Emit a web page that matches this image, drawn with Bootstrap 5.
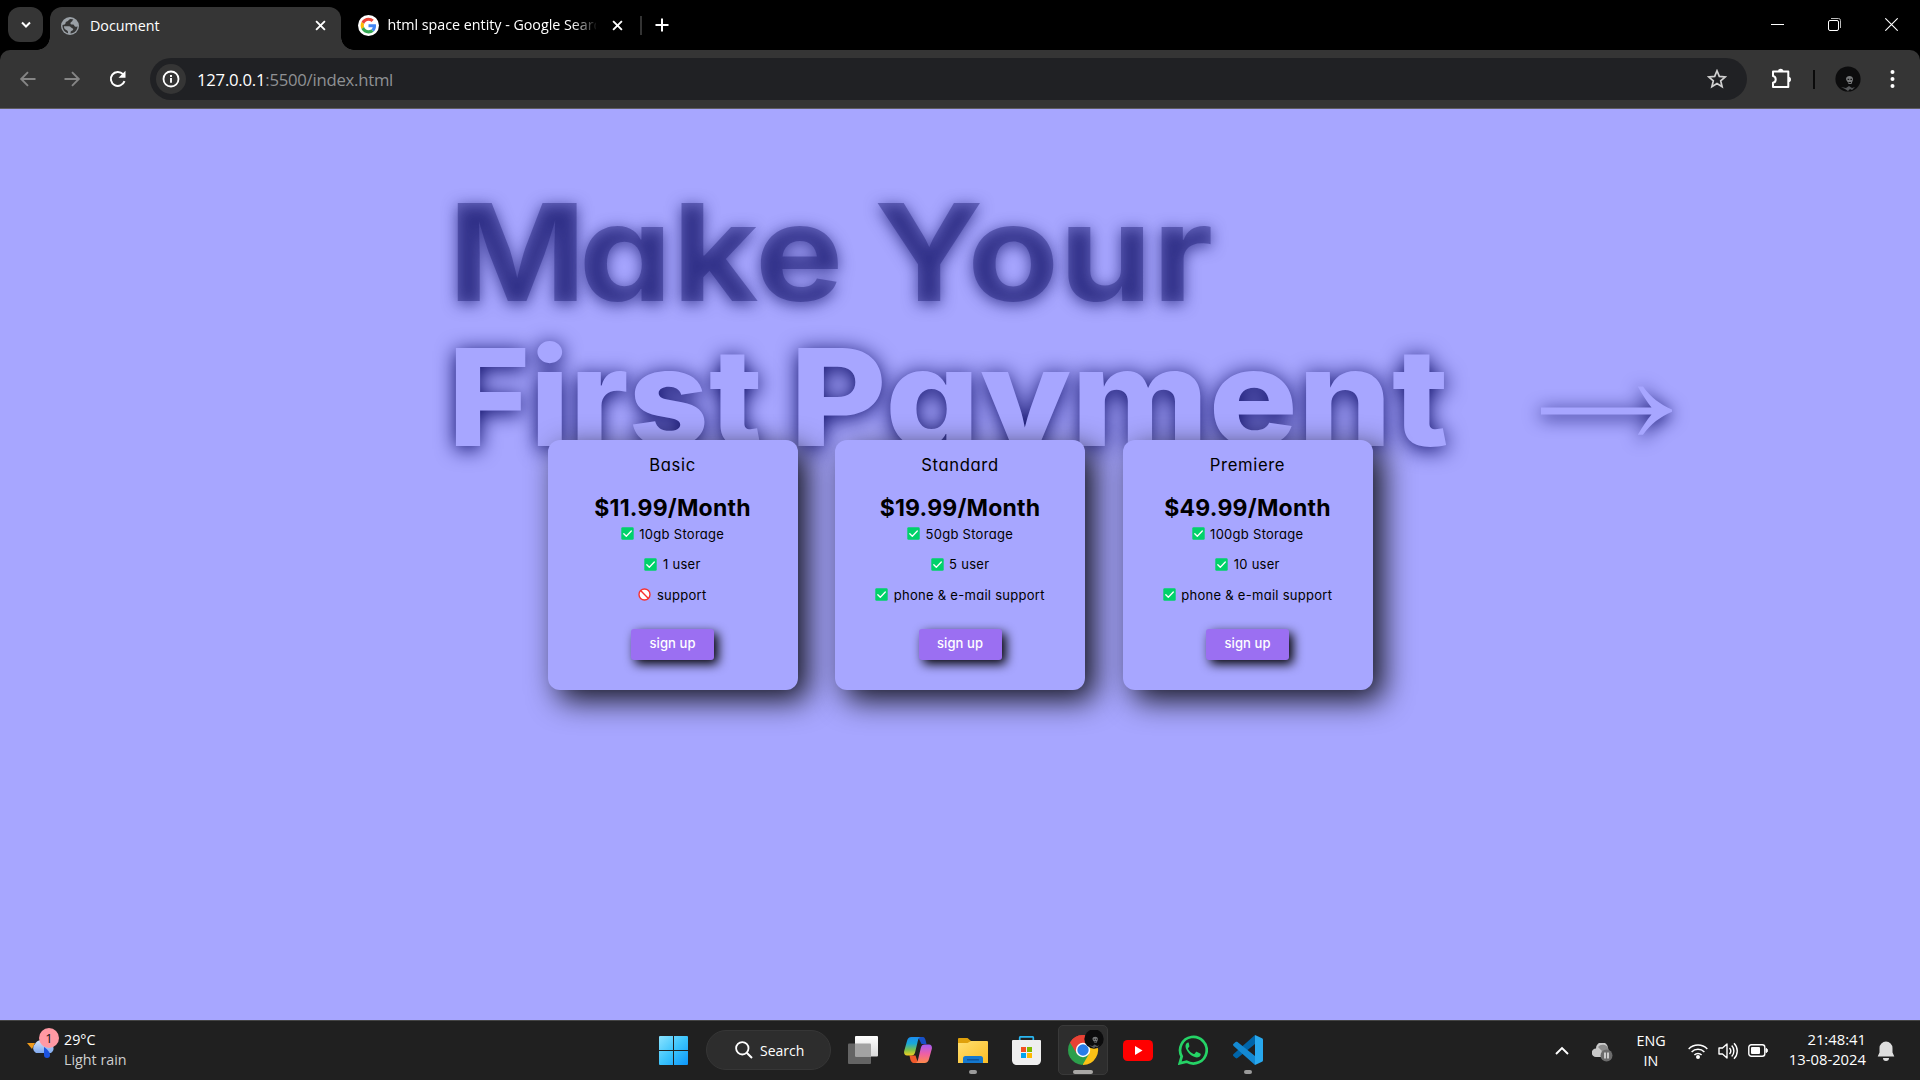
<!DOCTYPE html>
<html lang="en">
<head>
<meta charset="utf-8">
<title>Document</title>
<link href="https://cdn.jsdelivr.net/npm/bootstrap@5.3.0/dist/css/bootstrap.min.css" rel="stylesheet">
<style>
body{width:1920px;height:1080px;overflow:hidden;background:#a7a6ff;font-family:"Open Sans","Noto Sans",sans-serif;color:#fff}
svg{display:block;flex:none}
/* browser window */
.tabstrip{height:50px;background:#000;padding-left:8px}
.tabsearch{width:35px;height:35px;border-radius:12px;background:#353535;margin-top:7px}
.tab-active{width:291px;height:43px;margin:7px 0 0 7px;background:#353535;border-radius:12px 12px 0 0;position:relative;padding:0 13px 6px 10px}
.tab-active::before,.tab-active::after{content:"";position:absolute;bottom:0;width:13px;height:13px}
.tab-active::before{left:-13px;background:radial-gradient(circle at 0 0,#0000 12.5px,#353535 13px)}
.tab-active::after{right:-13px;background:radial-gradient(circle at 100% 0,#0000 12.5px,#353535 13px)}
.tab-label{font-size:14.3px;line-height:20px;white-space:nowrap;letter-spacing:-.02px}
.tab-idle{width:283px;height:50px;padding-left:17px}
.fade-label{width:208px;overflow:hidden;-webkit-mask-image:linear-gradient(90deg,#000 184px,#0000 210px);mask-image:linear-gradient(90deg,#000 184px,#0000 210px)}
.tab-sep{width:2px;height:19px;background:#333}
.toolbar-strip{height:59px;background:linear-gradient(#000 0,#000 12px,#353535 12px);position:relative}
.toolbar-inner{height:59px;background:#353535;border-radius:10px 10px 0 0;border-bottom:1px solid #5f5d62;padding:0 20px 0 18px}
.omnibox{width:1597px;height:42px;border-radius:21px;background:#202124;margin-left:22px;padding:0 20px 0 6px}
.info-dot{width:30px;height:30px;border-radius:50%;background:#353535}
.url{font-size:16.7px;letter-spacing:-.24px;margin:1px 0 0 11px;color:#8f9194}
.url b{font-weight:400;color:#fff}
.bar-sep{width:2px;height:19px;background:#0a0a0a}
/* page */
.page-area{height:911px;padding-top:71px;overflow:hidden;font-family:Inter,"Liberation Sans",sans-serif;font-feature-settings:"cv11";color:#000}
.hero{padding-left:457px;font-size:135px;line-height:145px;font-weight:700;margin:0}
.hero-line{height:145px}
.wd{display:block;white-space:nowrap;transform-origin:0 50%}
.hero-1{color:rgba(25,25,112,.42);text-shadow:0 3px 14px rgba(25,25,112,.72)}
.hero-2{color:#a7a6ff;text-shadow:0 3px 20px #080863;font-weight:800}
.w-make{width:420px;transform:scaleX(1.1);margin-left:-9px}
.cap-m{letter-spacing:-7px}
.w-your{transform:scaleX(1.11);margin-left:6px}
.w-first{width:342px;transform:scaleX(1.038);margin-left:-9px}
.w-pay{width:751px;transform:scaleX(1.098)}
.arrow{overflow:visible;margin-top:61px;filter:drop-shadow(0 3px 9px #080863)}
.plans{gap:37.5px;margin-top:-30px;position:relative}
.plan{width:250px;height:250px;border-radius:12px;background:#a7a6ff;box-shadow:10px 10px 30px rgba(0,0,0,.88);padding-top:13px}
.plan-name{font-size:16.6px;line-height:24px;letter-spacing:.66px;font-weight:400}
.plan-price{font-size:23px;line-height:32px;letter-spacing:.22px;font-weight:700;margin-top:14.5px}
.perk{font-size:13px;line-height:20px;letter-spacing:.28px;gap:5.5px;margin-bottom:10.7px;font-weight:400}
.signup{width:83px;height:31px;border:0;border-radius:3px;background:#9b6ff2;color:#fff;font-size:13px;font-weight:500;letter-spacing:.1px;margin-top:13.5px;padding:0 0 3px;line-height:20px;box-shadow:4px 4px 11px #000}
/* taskbar */
.taskbar{height:60px;background:#202020;border-top:1px solid #444;position:relative}
.slot{width:55px;height:60px;position:relative}
.slot i{position:absolute;bottom:6px;left:50%;transform:translateX(-50%);width:8px;height:4px;border-radius:2px;background:#9a9a9a}
.slot-on::before{content:"";position:absolute;inset:5px 2.5px 5px;border:1px solid #393939;border-radius:5px;background:#2d2d2d}
.slot-on i{width:20px;background:#a9a8a6}
.slot svg{position:relative}
.pill{width:125px;height:40px;border-radius:20px;background:#2d2d2d;border:1px solid #363636;margin:0 4.5px 0 5px;font-size:14px;padding-left:28px;gap:7px}
.tb-mid{position:absolute;left:646px;top:-1px}
.tb-left{position:absolute;left:27px;top:0}
.tb-right{position:absolute;right:25px;top:0;height:59px}
.tb-txt{font-size:14.3px;line-height:20px}
</style>
<script src="https://cdn.jsdelivr.net/npm/bootstrap@5.3.0/dist/js/bootstrap.bundle.min.js"></script>
</head>
<body class="d-flex flex-column">
<svg width="0" height="0" class="position-absolute">
<defs>
<symbol id="check" viewBox="0 0 13 13"><rect x=".3" y=".3" width="12.4" height="12.4" rx="1.3" fill="#00d26a"/><path d="M2.8 6.7l2.5 2.5 5-5.2" fill="none" stroke="#fff" stroke-width="1.3" stroke-linecap="round" stroke-linejoin="round"/></symbol>
<symbol id="ban" viewBox="0 0 13 13"><circle cx="6.5" cy="6.5" r="5.5" fill="#fff" stroke="#f8312f" stroke-width="1.4"/><path d="M2.6 2.6l7.8 7.8" stroke="#f8312f" stroke-width="1.4"/></symbol>
<symbol id="cross" viewBox="0 0 10 10"><path d="M1 1l8 8M9 1l-8 8" stroke="#fff" stroke-width="1.7" fill="none"/></symbol>
<symbol id="skull" viewBox="0 0 26 26"><circle cx="13" cy="13" r="12.6" fill="#0c0c0d"/><path d="M11 13c0-4 7-4 7 0 0 2-1 3-1.500 5h-3c0-2-2.500-3-2.500-5z" fill="#77797b"/><path d="M12.600 13.400h1.600M15.400 13.400H17M13.500 16.500h2.500" stroke="#191919" stroke-width="1.200"/><path d="M6 21l5 1 3-2 3 2 3-1-3 3-2-1-2 2-3-2z" fill="#55575a"/></symbol>
</defs>
</svg>

<header>
<div class="tabstrip d-flex">
  <div class="tabsearch d-flex align-items-center justify-content-center"><svg width="12" height="8" viewBox="0 0 12 8"><path d="M2 1.500l4 4 4-4" fill="none" stroke="#fff" stroke-width="2"/></svg></div>
  <div class="tab-active d-flex align-items-center">
    <svg width="20" height="20" viewBox="0 0 20 20"><circle cx="10" cy="10" r="9" fill="#9aa0a6"/><path d="M10.500 3c-2 .3-1.800 2-3.600 2.500C5 6 6 8 4.500 8.500L2.500 9c-.3 4 2 7.300 5.500 8.200.2-1.700-.2-3-1.800-3.300C4.500 13.500 4 12 4 10.300h5c1.800 0 2 1.700 3.300 1.900 1.400.2 1.200 2.300-.5 2.600-1.500.3-1 1.500-1.300 2.700 4-.3 7-3.200 7-7.300-1.300.9-2.800.8-3.200-.5-.4-1.400-1.400-1-2.600-1.100-1.700-.2-1.700-2.400-.2-2.900 1.300-.4.8-1.700 2-2.100-1-.5-2-.7-3-.6z" fill="#353535"/></svg>
    <span class="tab-label" style="margin-left:10px">Document</span>
    <svg class="ms-auto" width="11" height="11" style="margin-right:2px"><use href="#cross"/></svg>
  </div>
  <div class="tab-idle d-flex align-items-center">
    <svg width="21" height="21" viewBox="0 0 48 48"><circle cx="24" cy="24" r="24" fill="#fff"/><g transform="translate(6 6) scale(.75)"><path fill="#ea4335" d="M24 9.500c3.540 0 6.710 1.220 9.210 3.600l6.850-6.850C35.900 2.380 30.470 0 24 0 14.620 0 6.510 5.380 2.560 13.220l7.980 6.190C12.430 13.720 17.740 9.500 24 9.500z"/><path fill="#4285f4" d="M46.980 24.550c0-1.570-.15-3.090-.38-4.550H24v9.020h12.940c-.58 2.960-2.260 5.480-4.780 7.180l7.730 6c4.510-4.180 7.090-10.360 7.090-17.650z"/><path fill="#fbbc05" d="M10.530 28.590c-.48-1.450-.76-2.990-.76-4.590s.27-3.140.76-4.590l-7.980-6.190C.92 16.460 0 20.120 0 24c0 3.880.92 7.540 2.560 10.780l7.970-6.190z"/><path fill="#34a853" d="M24 48c6.480 0 11.930-2.130 15.890-5.810l-7.730-6c-2.150 1.450-4.920 2.300-8.160 2.300-6.260 0-11.570-4.220-13.470-9.910l-7.980 6.190C6.510 42.620 14.620 48 24 48z"/></g></svg>
    <span class="tab-label fade-label" style="margin-left:8.500px">html space entity - Google Search</span>
    <svg width="11" height="11" style="margin-left:16px"><use href="#cross"/></svg>
  </div>
  <div class="d-flex align-items-center" style="margin-left:16px">
    <span class="tab-sep"></span>
    <svg style="margin-left:13px" width="14" height="14" viewBox="0 0 14 14"><path d="M7 .5v13M.5 7h13" stroke="#fff" stroke-width="2"/></svg>
  </div>
  <div class="d-flex align-items-center ms-auto" style="padding-right:22px;gap:44px;height:49px">
    <svg width="13" height="13" viewBox="0 0 13 13"><path d="M0 6.500h13" stroke="#fff"/></svg>
    <svg width="13" height="13" viewBox="0 0 13 13"><rect x=".5" y="2.500" width="10" height="10" rx="1.500" fill="none" stroke="#fff"/><path d="M3 .5h7.500a2 2 0 0 1 2 2V10" fill="none" stroke="#bbb"/></svg>
    <svg width="13" height="13" viewBox="0 0 13 13"><path d="M.3.3l12.400 12.400M12.700.3L.3 12.700" stroke="#fff" stroke-width="1.100"/></svg>
  </div>
</div>
<div class="toolbar-strip">
<div class="toolbar-inner d-flex align-items-center">
  <svg width="20" height="20" viewBox="0 0 20 20"><path d="M17.500 10H3.500M10 3.200L3.200 10l6.800 6.800" fill="none" stroke="#858585" stroke-width="1.900"/></svg>
  <svg style="margin-left:24px" width="20" height="20" viewBox="0 0 20 20"><path d="M2.500 10h14M10 3.200l6.800 6.800-6.800 6.800" fill="none" stroke="#858585" stroke-width="1.900"/></svg>
  <svg style="margin-left:26px" width="20" height="20" viewBox="0 0 20 20"><path d="M16.500 12.200A7 7 0 1 1 15 5.100" fill="none" stroke="#fff" stroke-width="2"/><path d="M17.500 1.800v7h-7z" fill="#fff"/></svg>
  <div class="omnibox d-flex align-items-center">
    <span class="info-dot d-flex align-items-center justify-content-center"><svg width="18" height="18" viewBox="0 0 18 18"><circle cx="9" cy="9" r="7.500" fill="none" stroke="#fff" stroke-width="1.800"/><path d="M9 8v4.700M9 5v1.900" stroke="#fff" stroke-width="1.900"/></svg></span>
    <span class="url"><b>127.0.0.1</b>:5500/index.html</span>
    <svg class="ms-auto" width="20" height="20" viewBox="0 0 20 20"><path d="M10 1.800l2.300 5.600 6 .5-4.600 3.900 1.400 5.900-5.100-3.200-5.100 3.200 1.400-5.900L1.700 7.900l6-.5z" fill="none" stroke="#d0d0d0" stroke-width="1.700"/></svg>
  </div>
  <svg style="margin-left:23px" width="22" height="22" viewBox="0 0 22 22"><path d="M3 3.500h15.300v15.600H3v-4.300c3.600-.8 3.600-6 0-6.800z" fill="none" stroke="#fff" stroke-width="2" stroke-linejoin="round"/><path d="M8 3.500a2.700 2.700 0 0 1 5.400 0zM18.300 8.700a2.700 2.700 0 0 1 0 5.400z" fill="#fff"/></svg>
  <span class="bar-sep" style="margin-left:21px"></span>
  <svg style="margin-left:20px" width="26" height="26"><use href="#skull"/></svg>
  <svg style="margin-left:29px" width="5" height="20" viewBox="0 0 5 20"><g fill="#fff"><circle cx="2.500" cy="3" r="2"/><circle cx="2.500" cy="10" r="2"/><circle cx="2.500" cy="17" r="2"/></g></svg>
</div>
</div>
</header>

<main class="page-area">
  <h1 class="hero">
    <span class="hero-line hero-1 d-flex"><span class="wd w-make"><span class="cap-m">M</span>ake</span><span class="wd w-your">Your</span></span>
    <span class="hero-line hero-2 d-flex"><span class="wd w-first">First</span><span class="wd w-pay">Payment</span>
      <svg class="arrow" width="131" height="50" viewBox="0 0 131 50"><path d="M0 21.500h110.500C106 16 101.500 8.500 96.800.5h5.200c8 11 17 17.800 29 23v2.300c-12 5.200-21 12-29 23h-5.200c4.700-8 9.200-14.800 13.700-20.300H0z" fill="#a7a6ff"/></svg></span>
  </h1>
  <section class="plans d-flex justify-content-center">
    <article class="plan d-flex flex-column align-items-center">
      <div class="plan-name">Basic</div>
      <div class="plan-price">$11.99/Month</div>
      <div class="perk d-flex align-items-center"><svg width="13" height="13"><use href="#check"/></svg>10gb Storage</div>
      <div class="perk d-flex align-items-center"><svg width="13" height="13"><use href="#check"/></svg>1 user</div>
      <div class="perk d-flex align-items-center"><svg width="13" height="13"><use href="#ban"/></svg>support</div>
      <button class="signup">sign up</button>
    </article>
    <article class="plan d-flex flex-column align-items-center">
      <div class="plan-name">Standard</div>
      <div class="plan-price">$19.99/Month</div>
      <div class="perk d-flex align-items-center"><svg width="13" height="13"><use href="#check"/></svg>50gb Storage</div>
      <div class="perk d-flex align-items-center"><svg width="13" height="13"><use href="#check"/></svg>5 user</div>
      <div class="perk d-flex align-items-center"><svg width="13" height="13"><use href="#check"/></svg>phone &amp; e-mail support</div>
      <button class="signup">sign up</button>
    </article>
    <article class="plan d-flex flex-column align-items-center">
      <div class="plan-name">Premiere</div>
      <div class="plan-price">$49.99/Month</div>
      <div class="perk d-flex align-items-center"><svg width="13" height="13"><use href="#check"/></svg>100gb Storage</div>
      <div class="perk d-flex align-items-center"><svg width="13" height="13"><use href="#check"/></svg>10 user</div>
      <div class="perk d-flex align-items-center"><svg width="13" height="13"><use href="#check"/></svg>phone &amp; e-mail support</div>
      <button class="signup">sign up</button>
    </article>
  </section>
</main>

<footer class="taskbar">
  <div class="tb-left d-flex">
    <svg width="33" height="40" viewBox="0 0 33 40" style="margin-top:6px"><defs><linearGradient id="cl" x2="0" y2="1"><stop stop-color="#d5e5fb"/><stop offset="1" stop-color="#7fa9ef"/></linearGradient></defs><path d="M0 16l8 0-3 6z" fill="#ee9a1c"/><path d="M23 11l3 5-5 1z" fill="#ee9a1c"/><path d="M9 26a5.500 5.500 0 0 1-1-9 7 7 0 0 1 12-1 5.500 5.500 0 0 1 4 10z" fill="url(#cl)"/><path d="M17 20c3 2 6 5 6 8a3 3 0 0 1-6 0z" fill="#1b53e0"/><circle cx="22" cy="11" r="10" fill="#ff99a4"/><text x="22" y="15.500" font-size="13" text-anchor="middle" fill="#111" font-family="Open Sans">1</text></svg>
    <div class="tb-txt" style="margin:9px 0 0 4px"><div>29°C</div><div style="color:#cfcfcf">Light rain</div></div>
  </div>

  <nav class="tb-mid d-flex align-items-center">
    <div class="slot d-flex align-items-center justify-content-center"><svg width="29" height="29" viewBox="0 0 29 29"><defs><linearGradient id="win" x2="1" y2="1"><stop stop-color="#8be3ff"/><stop offset=".5" stop-color="#3cc4fc"/><stop offset="1" stop-color="#0c96fa"/></linearGradient></defs><path d="M0 1a1 1 0 0 1 1-1h13v14H0zM15 0h13a1 1 0 0 1 1 1v13H15zM0 15h14v14H1a1 1 0 0 1-1-1zM15 15h14v13a1 1 0 0 1-1 1H15z" fill="url(#win)"/></svg></div>
    <div class="pill d-flex align-items-center"><svg width="18" height="18" viewBox="0 0 18 18"><circle cx="7.300" cy="7.300" r="6.200" fill="none" stroke="#fff" stroke-width="1.800"/><path d="M11.700 11.700l5.300 5.300" stroke="#fff" stroke-width="2"/></svg><span>Search</span></div>
    <div class="slot d-flex align-items-center justify-content-center"><svg width="30" height="28" viewBox="0 0 30 28"><defs><linearGradient id="tv" x2="0" y2="1"><stop stop-color="#fff"/><stop offset="1" stop-color="#d9d9d9"/></linearGradient></defs><rect x="0" y="7.500" width="23" height="20.500" rx="1" fill="#646464"/><rect x="7" y="0" width="23" height="20.500" rx="1" fill="url(#tv)"/><path d="M7 7.500h15a1 1 0 0 1 1 1v12H8a1 1 0 0 1-1-1z" fill="#a3a3a3"/></svg></div>
    <div class="slot d-flex align-items-center justify-content-center"><svg width="28" height="26" viewBox="0 0 28 26"><defs><linearGradient id="ca" x2="0" y2="1"><stop stop-color="#1b8df0"/><stop offset=".35" stop-color="#19a7d8"/><stop offset=".7" stop-color="#7cc04a"/><stop offset="1" stop-color="#f5d020"/></linearGradient><linearGradient id="cb" x2="0" y2="1"><stop stop-color="#a35cf5"/><stop offset=".5" stop-color="#ee5fa5"/><stop offset="1" stop-color="#ff8a4a"/></linearGradient></defs><path d="M14 0h5c1.500 0 2 1.500 2.500 3l1 4h-5z" fill="#1750c8"/><path d="M14 26H9.500C8 26 7 24.500 6.500 23l-1-4.500h6z" fill="#f0592b"/><path d="M7.500 0H17c-2 0-2.700 2-3.200 4l-2.600 11c-.6 2.500-1.700 3.500-4 3.500H3C.5 18.500-.3 16.500.2 14L3 4C3.700 1.500 5 0 7.500 0z" fill="url(#ca)"/><path d="M20.500 26H11c2 0 2.700-2 3.200-4l2.600-11c.6-2.500 1.700-3.500 4-3.500H25c2.500 0 3.300 2 2.800 4.500L25 22c-.7 2.500-2 4-4.500 4z" fill="url(#cb)"/></svg></div>
    <div class="slot d-flex align-items-center justify-content-center"><svg width="30" height="27" viewBox="0 0 30 27"><defs><linearGradient id="fo" x2="1" y2="1"><stop stop-color="#ffdf70"/><stop offset="1" stop-color="#fbbd25"/></linearGradient></defs><path d="M0 2a1 1 0 0 1 1-1h8.500l3.500 3v4H0z" fill="#dfa00b"/><path d="M0 6h9.500l3.500-2h16a1 1 0 0 1 1 1v21H0z" fill="url(#fo)"/><path d="M5 26v-4.500a2.500 2.500 0 0 1 2.500-2.500h15a2.500 2.500 0 0 1 2.500 2.500V26z" fill="#1478cf"/><path d="M9 22.800h12" stroke="#0c4f94" stroke-width="1.300"/></svg><i></i></div>
    <div class="slot d-flex align-items-center justify-content-center pe-1"><svg width="29" height="29" viewBox="0 0 29 29"><path d="M7.700 6V1.800a1 1 0 0 1 1-1h11.600a1 1 0 0 1 1 1V6" fill="none" stroke="#29b6f0" stroke-width="1.700"/><path d="M0 5a1 1 0 0 1 1-1h27a1 1 0 0 1 1 1v19c0 3-2 5-5 5H5c-3 0-5-2-5-5z" fill="#efefef"/><path d="M9 11h5v5H9z" fill="#f25022"/><path d="M15 11h5v5h-5z" fill="#7fba00"/><path d="M9 17h5v5H9z" fill="#00a4ef"/><path d="M15 17h5v5h-5z" fill="#ffb900"/></svg></div>
    <div class="slot slot-on d-flex align-items-center justify-content-center"><svg width="54" height="40" viewBox="0 0 54 40"><g transform="translate(12 5)"><path d="M15 15L2 7.500A15 15 0 0 1 28 7.500z" fill="#e94235"/><path d="M15 15l13-7.500A15 15 0 0 1 15 30z" fill="#fbc116"/><path d="M15 15v0L2 7.500A15 15 0 0 0 14.500 30l6.500-11z" fill="#2c9f4b"/><path d="M15 8h13.300A15 15 0 0 0 2 7.500l6.700 11z" fill="#e94235"/><circle cx="15" cy="15" r="7.200" fill="#fff"/><circle cx="15" cy="15" r="5.700" fill="#2a7de9"/></g><svg x="28" y="-1" width="20" height="20"><use href="#skull"/></svg></svg><i></i></div>
    <div class="slot d-flex align-items-center justify-content-center"><svg width="30" height="21" viewBox="0 0 30 21"><rect width="30" height="21" rx="4.500" fill="#f00"/><path d="M12 6v9l7.500-4.500z" fill="#fff"/></svg></div>
    <div class="slot d-flex align-items-center justify-content-center"><svg width="30" height="30" viewBox="0 0 30 30"><path d="M1.700 28.300l2-6.800A13.300 13.300 0 1 1 8.600 26.600z" fill="none" stroke="#25d366" stroke-width="2.700"/><path d="M10 7.500c-1.500.3-2.600 1.800-2.500 3.800.3 5 6.500 11 11.200 11.200 2 0 3.700-1 4-2.700.1-.9.100-1-.6-1.400l-3-1.500c-.6-.2-.9-.1-1.300.4l-1.200 1.500c-.3.300-.6.400-1 .2-2.500-1-4.300-2.700-5.600-5-.2-.4-.1-.7.200-1l1-1.300c.2-.3.300-.6.100-1L10.800 8c-.2-.4-.4-.5-.8-.5z" fill="#25d366"/></svg></div>
    <div class="slot d-flex align-items-center justify-content-center"><svg width="30" height="30" viewBox="0 0 30 30"><path d="M22 0v9L4.500 23c-.6.500-1.300.5-1.900 0L.6 21.300c-.8-.7-.8-1.500 0-2.200z" fill="#0065a9"/><path d="M22 30v-9L4.500 7c-.6-.5-1.300-.5-1.900 0L.6 8.700c-.8.700-.8 1.500 0 2.200z" fill="#1489d2"/><path d="M22 0l7 3.200a1.700 1.700 0 0 1 1 1.600v20.400c0 .7-.4 1.300-1 1.600L22 30z" fill="#28a8ee"/></svg><i></i></div>
  </nav>

  <div class="tb-right d-flex align-items-center tb-txt">
    <svg width="14" height="9" viewBox="0 0 14 9"><path d="M1 8l6-6 6 6" fill="none" stroke="#fff" stroke-width="1.900"/></svg>
    <svg style="margin-left:23px;margin-top:3px" width="21" height="19" viewBox="0 0 21 19"><path d="M4 14a4.200 4.200 0 0 1 0-8.500A6 6 0 0 1 16 5l-4 9z" fill="#c9c9c9"/><path d="M6 4a6 6 0 0 1 10.500 2L18 10h-6z" fill="#8c8c8c"/><circle cx="14.500" cy="12.500" r="6" fill="#6c6c6c"/><path d="M13 9.500v6M16 9.500v6" stroke="#fff" stroke-width="1.300"/></svg>
    <div class="text-center" style="margin-left:23px;width:30px;white-space:nowrap"><div>ENG</div><div>IN</div></div>
    <svg style="margin-left:22px" width="20" height="16" viewBox="0 0 20 16"><g fill="none" stroke="#fff" stroke-width="1.500"><path d="M.7 6a13 13 0 0 1 18.600 0"/><path d="M3.600 9a9 9 0 0 1 12.800 0"/><path d="M6.400 12a5 5 0 0 1 7.200 0"/></g><circle cx="10" cy="14" r="2" fill="#fff"/></svg>
    <svg style="margin-left:10px" width="20" height="18" viewBox="0 0 20 18"><g fill="none" stroke="#fff" stroke-width="1.400"><path d="M1 6h3.500L9 2v14l-4.500-4H1z" stroke-linejoin="round"/><path d="M11.500 6a4.500 4.500 0 0 1 0 6M13.700 3.500a8 8 0 0 1 0 11M16 1.200a11 11 0 0 1 0 15.600"/></g></svg>
    <svg style="margin-left:10px" width="20" height="13" viewBox="0 0 20 13"><rect x=".8" y=".8" width="16" height="11.400" rx="2.500" fill="none" stroke="#fff" stroke-width="1.400"/><rect x="3" y="3" width="9" height="7" rx="1" fill="#fff"/><path d="M18 4.500c2 0 2 4 0 4z" fill="#fff" stroke="#fff"/></svg>
    <div class="text-end" style="margin:-3px 0 0 20px;width:78px;white-space:nowrap;font-size:14.800px"><div>21:48:41</div><div>13-08-2024</div></div>
    <svg style="margin-left:11px" width="18" height="20" viewBox="0 0 18 20"><path d="M9 .5a6.500 6.500 0 0 1 6.500 6.500v4.500l1.800 4H.7l1.800-4V7A6.500 6.500 0 0 1 9 .5zM6 17h6a3 3 0 0 1-6 0z" fill="#dedede"/></svg>
  </div>
</footer>
</body>
</html>
